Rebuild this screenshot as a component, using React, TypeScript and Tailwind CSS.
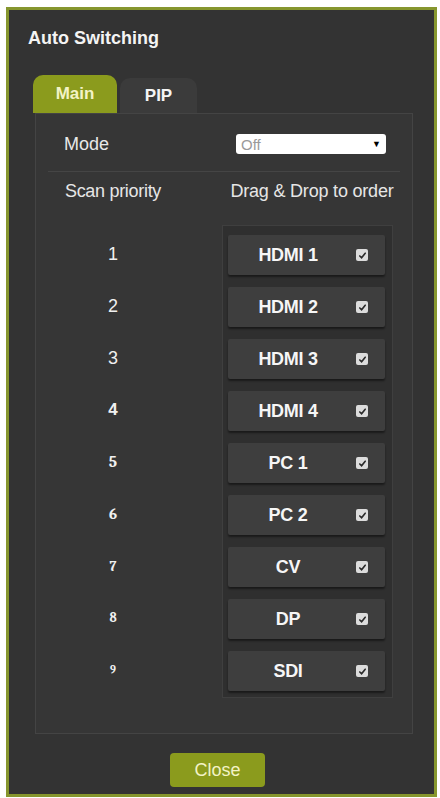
import React from 'react';

type Source = { label: string };

const sources: Source[] = [
  { label: 'HDMI 1' },
  { label: 'HDMI 2' },
  { label: 'HDMI 3' },
  { label: 'HDMI 4' },
  { label: 'PC 1' },
  { label: 'PC 2' },
  { label: 'CV' },
  { label: 'DP' },
  { label: 'SDI' },
];

// priority digits, lower ones rendered smaller like the device UI does
const digitClass = [
  'text-[18px]',
  'text-[18px]',
  'text-[18px]',
  'text-[17px] font-bold',
  'text-[16px] font-bold font-serif',
  'text-[15px] font-bold font-serif',
  'text-[14px] font-bold font-serif',
  'text-[13px] font-bold font-serif',
  'text-[11px] font-bold font-serif',
];

function CheckBox() {
  return (
    <span className="w-[12px] h-[12px] rounded-[2px] bg-[#dcdcdc] flex items-center justify-center shrink-0">
      <svg width="9" height="9" viewBox="0 0 10 10">
        <path d="M2 5.5 L4 7.5 L8 2.5" stroke="#2a2a2a" strokeWidth="1.8" fill="none" strokeLinecap="round" />
      </svg>
    </span>
  );
}

export default function App() {
  return (
    <div
      className="w-[440px] h-[798px] bg-white pt-[7px] pl-[6px]"
      style={{ fontFamily: '"Liberation Sans", Arial, sans-serif' }}
    >
      <div className="w-[431px] h-[790px] border-[3px] border-[#86962e] bg-[#333333] flex flex-col">
        {/* header */}
        <div className="pt-[18px] pl-[19px] h-[38px] text-[18px] leading-[20px] font-bold text-[#f4f4f4]">
          Auto Switching
        </div>

        {/* tabs */}
        <div className="mt-[27px] ml-[24px] flex items-end gap-[3px]">
          <div className="w-[84px] h-[38px] rounded-t-[10px] bg-[#8b9b1d] flex items-center justify-center text-[17px] font-bold text-[#f3f3c6]">
            Main
          </div>
          <div className="w-[77px] h-[35px] rounded-t-[10px] bg-[#3b3b3b] flex items-center justify-center text-[17px] font-bold text-[#f4f4f4]">
            PIP
          </div>
        </div>

        {/* tab panel */}
        <div className="ml-[26px] w-[378px] h-[621px] bg-[#363636] border border-[#444444] flex flex-col">
          <div className="mt-[20px] pl-[28px] h-[20px] flex items-center">
            <span className="w-[172px] text-[18px] text-[#e8e8e8]">Mode</span>
            <div className="w-[150px] h-[20px] bg-white rounded-[3px] flex items-center justify-between px-[5px]">
              <span className="text-[15px] text-[#9a9a9a] leading-none">Off</span>
              <span className="text-[9px] text-black leading-none">▼</span>
            </div>
          </div>

          <div className="mt-[17px] mx-[12px] h-px bg-[#454545]" />

          <div className="mt-[9px] h-[20px] flex items-center text-[18px] text-[#e6e6e6]">
            <span className="w-[154px] text-center tracking-[-0.3px]">Scan priority</span>
            <span className="ml-[32px] w-[180px] text-center tracking-[-0.2px]">Drag &amp; Drop to order</span>
          </div>

          <div className="mt-[24px] flex">
            {/* priority numbers */}
            <div className="w-[154px] pt-[10px] flex flex-col gap-[12px]">
              {sources.map((_, i) => (
                <div key={i} className="h-[40px] flex items-center justify-center text-[#f0f0f0] -mt-[1px] mb-[1px]">
                  <span className={digitClass[i]}>{i + 1}</span>
                </div>
              ))}
            </div>

            {/* sortable source list */}
            <div className="ml-[32px] w-[171px] bg-[#2f2f2f] border border-[#3f3f3f] pt-[9px] pb-[6px] pl-[5px] pr-[7px] flex flex-col gap-[12px]">
              {sources.map((s) => (
                <div
                  key={s.label}
                  className="h-[40px] bg-[#3e3e3e] rounded-[2px] shadow-[0_2px_2px_rgba(0,0,0,0.45)] flex items-center pr-[17px]"
                >
                  <span className="flex-1 text-center text-[18px] font-bold text-[#f6f6f6] tracking-[-0.3px]">{s.label}</span>
                  <span className="ml-[8px]">
                    <CheckBox />
                  </span>
                </div>
              ))}
            </div>
          </div>
        </div>

        {/* footer */}
        <div className="mt-[19px] ml-[161px]">
          <button className="w-[95px] h-[34px] rounded-[4px] bg-[#8b9b1d] text-[18px] text-[#f3f3c6]">
            Close
          </button>
        </div>
      </div>
    </div>
  );
}
